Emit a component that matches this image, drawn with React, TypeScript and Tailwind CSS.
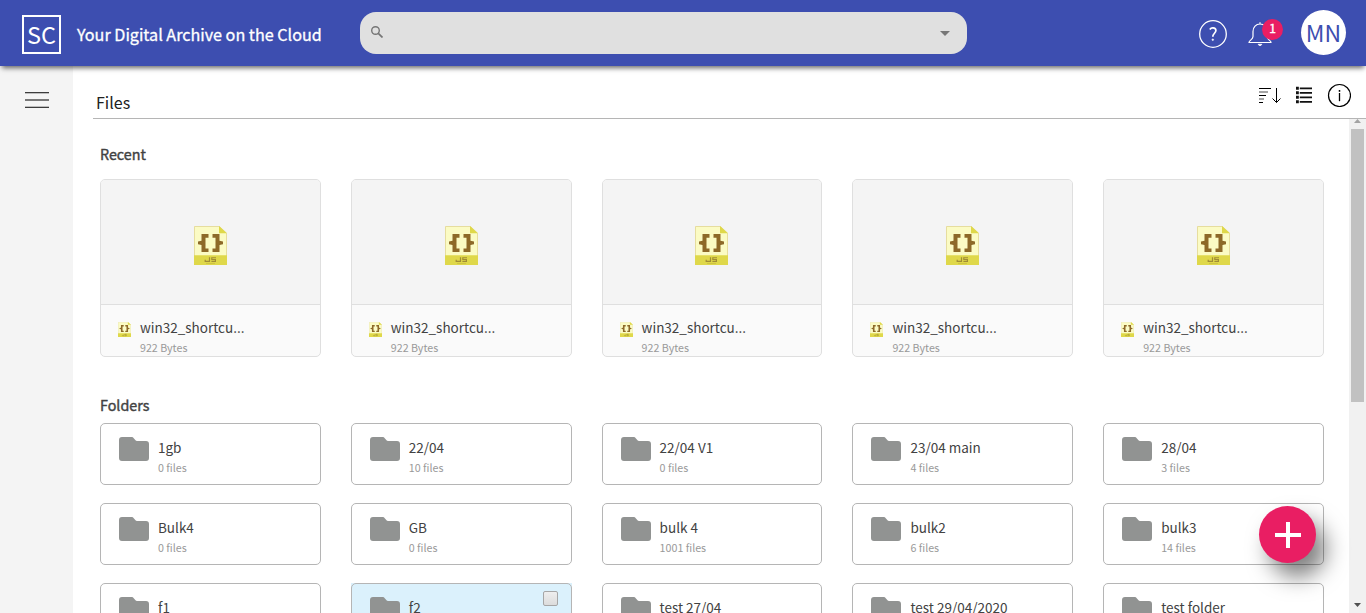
import React from "react";

const recent = [1, 2, 3, 4, 5].map((id) => ({ id, name: "win32_shortcu...", size: "922 Bytes" }));

type Folder = { name: string; files?: string; hovered?: boolean };

const folders: Folder[] = [
  { name: "1gb", files: "0 files" },
  { name: "22/04", files: "10 files" },
  { name: "22/04 V1", files: "0 files" },
  { name: "23/04 main", files: "4 files" },
  { name: "28/04", files: "3 files" },
  { name: "Bulk4", files: "0 files" },
  { name: "GB", files: "0 files" },
  { name: "bulk 4", files: "1001 files" },
  { name: "bulk2", files: "6 files" },
  { name: "bulk3", files: "14 files" },
  { name: "f1" },
  { name: "f2", hovered: true },
  { name: "test 27/04" },
  { name: "test 29/04/2020" },
  { name: "test folder" },
];

function JsFileIcon({ className }: { className: string }) {
  return (
    <svg viewBox="0 0 33 40" preserveAspectRatio="none" className={className}>
      <path d="M.5.5h25l7 7v32H.5z" fill="#fbfbc4" stroke="#e6dc9c" />
      <path d="M25 0l8 7.5h-8z" fill="#dfd84a" />
      <path d="M0 30h33v10H0z" fill="#dfd84a" />
      <path d="M7.500 8.300h7V12h-3v11h3v3.700h-7V19.500L4 18.800v-3l3.500-.8zM25.500 8.300h-7V12h3v11h-3v3.700h7V19.500l3.500-.7v-3l-3.500-.8z" fill="#8d6928" />
      <path d="M15.500 32v4.2h-4.300v-1.600M22 32.600h-4.200v1.800h3.600v1.900h-4" fill="none" stroke="#a18d35" strokeWidth="1.200" />
      <path d="M12 38.400h9" stroke="#c3b640" strokeWidth=".7" />
    </svg>
  );
}

function FolderIcon() {
  return (
    <svg viewBox="0 0 30 24" className="h-6 w-[30px] shrink-0">
      <path d="M3 0h9.500c1 0 1.500.3 2 1l2 2.300c.4.500.8.700 1.500.700H27a3 3 0 0 1 3 3v14a3 3 0 0 1-3 3H3a3 3 0 0 1-3-3V3a3 3 0 0 1 3-3z" fill="#919392" />
    </svg>
  );
}

function Header() {
  return (
    <header className="relative z-10 flex h-[66px] shrink-0 items-start bg-[#3d4eb0] shadow-[0_4px_5px_-2px_rgba(0,0,0,0.6)]">
      <div className="mt-[15px] ml-[22px] flex h-[39px] w-[39px] items-center justify-center border-2 border-white text-[23.5px] leading-[39px] text-white">
        SC
      </div>
      <h1 className="mt-[22px] ml-[16px] w-[283px] text-[16.15px] leading-6 whitespace-nowrap text-white [-webkit-text-stroke:0.3px_white]">
        Your Digital Archive on the Cloud
      </h1>
      <div className="mt-3 flex h-[42px] w-[607px] items-start justify-between rounded-[16px] bg-[#e0e0e0] pr-[17px] pl-[11px]">
        <svg viewBox="0 0 12 12" className="mt-[14px] h-3 w-3" fill="none" stroke="#757575" strokeWidth="1.4">
          <circle cx="4.500" cy="4.500" r="3.800" />
          <path d="M7.300 7.300l4.200 4.200" strokeWidth="1.700" />
        </svg>
        <svg viewBox="0 0 10 5" className="mt-[19px] h-[5px] w-[10px]">
          <path d="M0 0h10L5 5z" fill="#777" />
        </svg>
      </div>
      <svg viewBox="0 0 28 28" className="mt-5 ml-[232px] h-7 w-7" fill="none" stroke="white">
        <circle cx="14" cy="14" r="13.300" strokeWidth="1.300" />
        <path d="M10.800 9.500c.8-1.200 1.900-1.800 3.200-1.700 1.800.1 2.900 1.200 2.900 2.700 0 2.600-3.200 3-3.100 6.300" strokeWidth="1.700" />
        <circle cx="13.800" cy="19.700" r=".8" fill="white" strokeWidth=".6" />
      </svg>
      <div className="relative mt-[22px] ml-[21px] h-6 w-6">
        <svg viewBox="0 0 24 24" className="h-6 w-6" fill="none" stroke="white" strokeWidth="1.200">
          <path d="M12 .3v1.700M5 14.500V9.500C5 5 8 2 12 2s7 3 7 7.500v5c0 3 4 4 4 6H1c0-2 4-3 4-6z" />
          <path d="M10.200 22.300h3.600c-.3 1.600-3.300 1.600-3.600 0z" fill="white" strokeWidth=".8" />
        </svg>
        <span className="absolute -top-[3px] left-[14px] flex h-[21px] w-[21px] items-center justify-center rounded-full bg-[#e91e63] pb-[3px] text-[12px] leading-[16px] text-white [-webkit-text-stroke:0.4px_white]">
          1
        </span>
      </div>
      <div className="mt-[10px] ml-[29px] flex h-[45px] w-[45px] items-center justify-center rounded-full bg-white text-[23px] leading-[45px] text-[#3d4eb0]">
        MN
      </div>
    </header>
  );
}

function Toolbar() {
  return (
    <div className="flex h-[53px] shrink-0 items-start justify-between border-b border-[#b5b5b5] pr-[15px] pl-[3px]">
      <h2 className="mt-[24px] text-[16px] leading-6 text-[#212121]">Files</h2>
      <div className="mt-[18px] flex items-start">
        <svg viewBox="0 0 24 22" className="h-[22px] w-6" fill="none" stroke="black">
          <path d="M1 4.500h12M1 11.500h7M1 18.500h4" />
          <path d="M1 8h9M1 15h5" stroke="#888" strokeWidth="1.600" />
          <path d="M18.500 4v14.500M14.500 14.500l4 4 4-4" />
        </svg>
        <svg viewBox="0 0 17 18" className="mt-[2px] ml-[14px] h-[18px] w-4" preserveAspectRatio="none" stroke="#111" strokeWidth="1.800">
          <path d="M4 2.300h13M4 6.800h13M4 11.300h13M4 15.800h13" />
          <path d="M0 2.300h3M0 6.800h3M0 11.300h3M0 15.800h3" strokeWidth="3" />
        </svg>
        <svg viewBox="0 0 24 24" className="-mt-px ml-[15px] h-6 w-6" fill="none" stroke="black">
          <circle cx="12.500" cy="12.500" r="11" strokeWidth="1.200" />
          <path d="M12.500 10v8.200" strokeWidth="1.300" />
          <path d="M12.500 7v1.800" strokeWidth="1.500" />
        </svg>
      </div>
    </div>
  );
}

function Scrollbar() {
  return (
    <div className="flex w-[17px] shrink-0 flex-col items-center bg-[#f1f1f1]">
      <svg viewBox="0 0 7 4" className="h-[4px] w-[7px]">
        <path d="M0 4l3.500-4L7 4z" fill="#a3a3a3" />
      </svg>
      <div className="mt-[6px] h-[273px] w-[13px] bg-[#c1c1c1]" />
      <svg viewBox="0 0 7 4" className="mt-auto mb-[6px] h-[4px] w-[7px]">
        <path d="M0 0h7L3.500 4z" fill="#505050" />
      </svg>
    </div>
  );
}

export default function App() {
  return (
    <div className="relative flex h-[613px] w-[1366px] flex-col overflow-hidden bg-white font-['Noto_Sans_CJK_SC',sans-serif] text-[#424242]">
      <Header />
      <div className="flex min-h-0 flex-1">
        <aside className="w-[73px] shrink-0 bg-[#f4f4f4] pt-[26px] pl-[25px]">
          <svg viewBox="0 0 24 16" className="h-4 w-6">
            <path d="M0 .5h24M0 15.500h24" stroke="#3c3c3c" />
            <path d="M0 1.500h24M0 14.500h24" stroke="#bdbdbd" />
            <path d="M0 8h24" stroke="#777" strokeWidth="2" />
          </svg>
        </aside>
        <main className="flex min-w-0 flex-1 flex-col pl-5">
          <Toolbar />
          <div className="flex min-h-0 flex-1">
            <div className="min-w-0 flex-1 overflow-hidden pl-[7px]">
              <h3 className="mt-[23px] text-[14.3px] leading-6 [-webkit-text-stroke:0.4px_#424242]">Recent</h3>
              <div className="mt-[13px] grid w-[1224px] grid-cols-5 gap-x-[30px]">
                {recent.map((file) => (
                  <article key={file.id} className="h-[178px] overflow-hidden rounded-[5px] border border-[#dfdfdf] bg-[#fafafa]">
                    <div className="flex h-[125px] items-start justify-center border-b border-[#dfdfdf] bg-[#f4f4f4] pt-[46px]">
                      <JsFileIcon className="h-[39px] w-[33px]" />
                    </div>
                    <div className="flex pl-[17px]">
                      <JsFileIcon className="mt-[17px] h-[15px] w-[13px]" />
                      <div className="ml-[9px] pt-[12px]">
                        <p className="text-[13.5px] leading-5">{file.name}</p>
                        <p className="mt-px text-[10.7px] leading-5 text-[#999]">{file.size}</p>
                      </div>
                    </div>
                  </article>
                ))}
              </div>
              <h3 className="mt-[36px] text-[14.3px] leading-6 [-webkit-text-stroke:0.4px_#424242]">Folders</h3>
              <div className="mt-[6px] grid w-[1224px] grid-cols-5 gap-x-[30px] gap-y-[18px]">
                {folders.map((folder) => (
                  <div key={folder.name} className={folder.hovered ? "bg-[#dbf1fc]" : "bg-white"}>
                    <div className="flex h-[62px] rounded-[5px] border border-[#b5b5b5] pt-[13px] pl-[18px]">
                      <FolderIcon />
                      <div className="ml-[9px]">
                        <p className="text-[13.5px] leading-5">{folder.name}</p>
                        {folder.files && <p className="mt-px text-[10.7px] leading-5 text-[#999]">{folder.files}</p>}
                      </div>
                      {folder.hovered && (
                        <span className="-mt-[6px] mr-[13px] ml-auto h-[15px] w-[15px] rounded-[2px] border border-[#a6a6a6] bg-linear-to-b from-[#eee] to-[#dcdcdc]" />
                      )}
                    </div>
                  </div>
                ))}
              </div>
            </div>
            <Scrollbar />
          </div>
        </main>
      </div>
      <button
        aria-label="Add"
        className="absolute top-[506px] left-[1259px] flex h-[57px] w-[57px] items-center justify-center rounded-full bg-[#e91e63] pt-px shadow-[10px_14px_22px_rgba(0,0,0,0.5)]"
      >
        <svg viewBox="0 0 26 26" className="h-[26px] w-[26px]" stroke="white" strokeWidth="4">
          <path d="M13 0v26M0 13h26" />
        </svg>
      </button>
    </div>
  );
}
